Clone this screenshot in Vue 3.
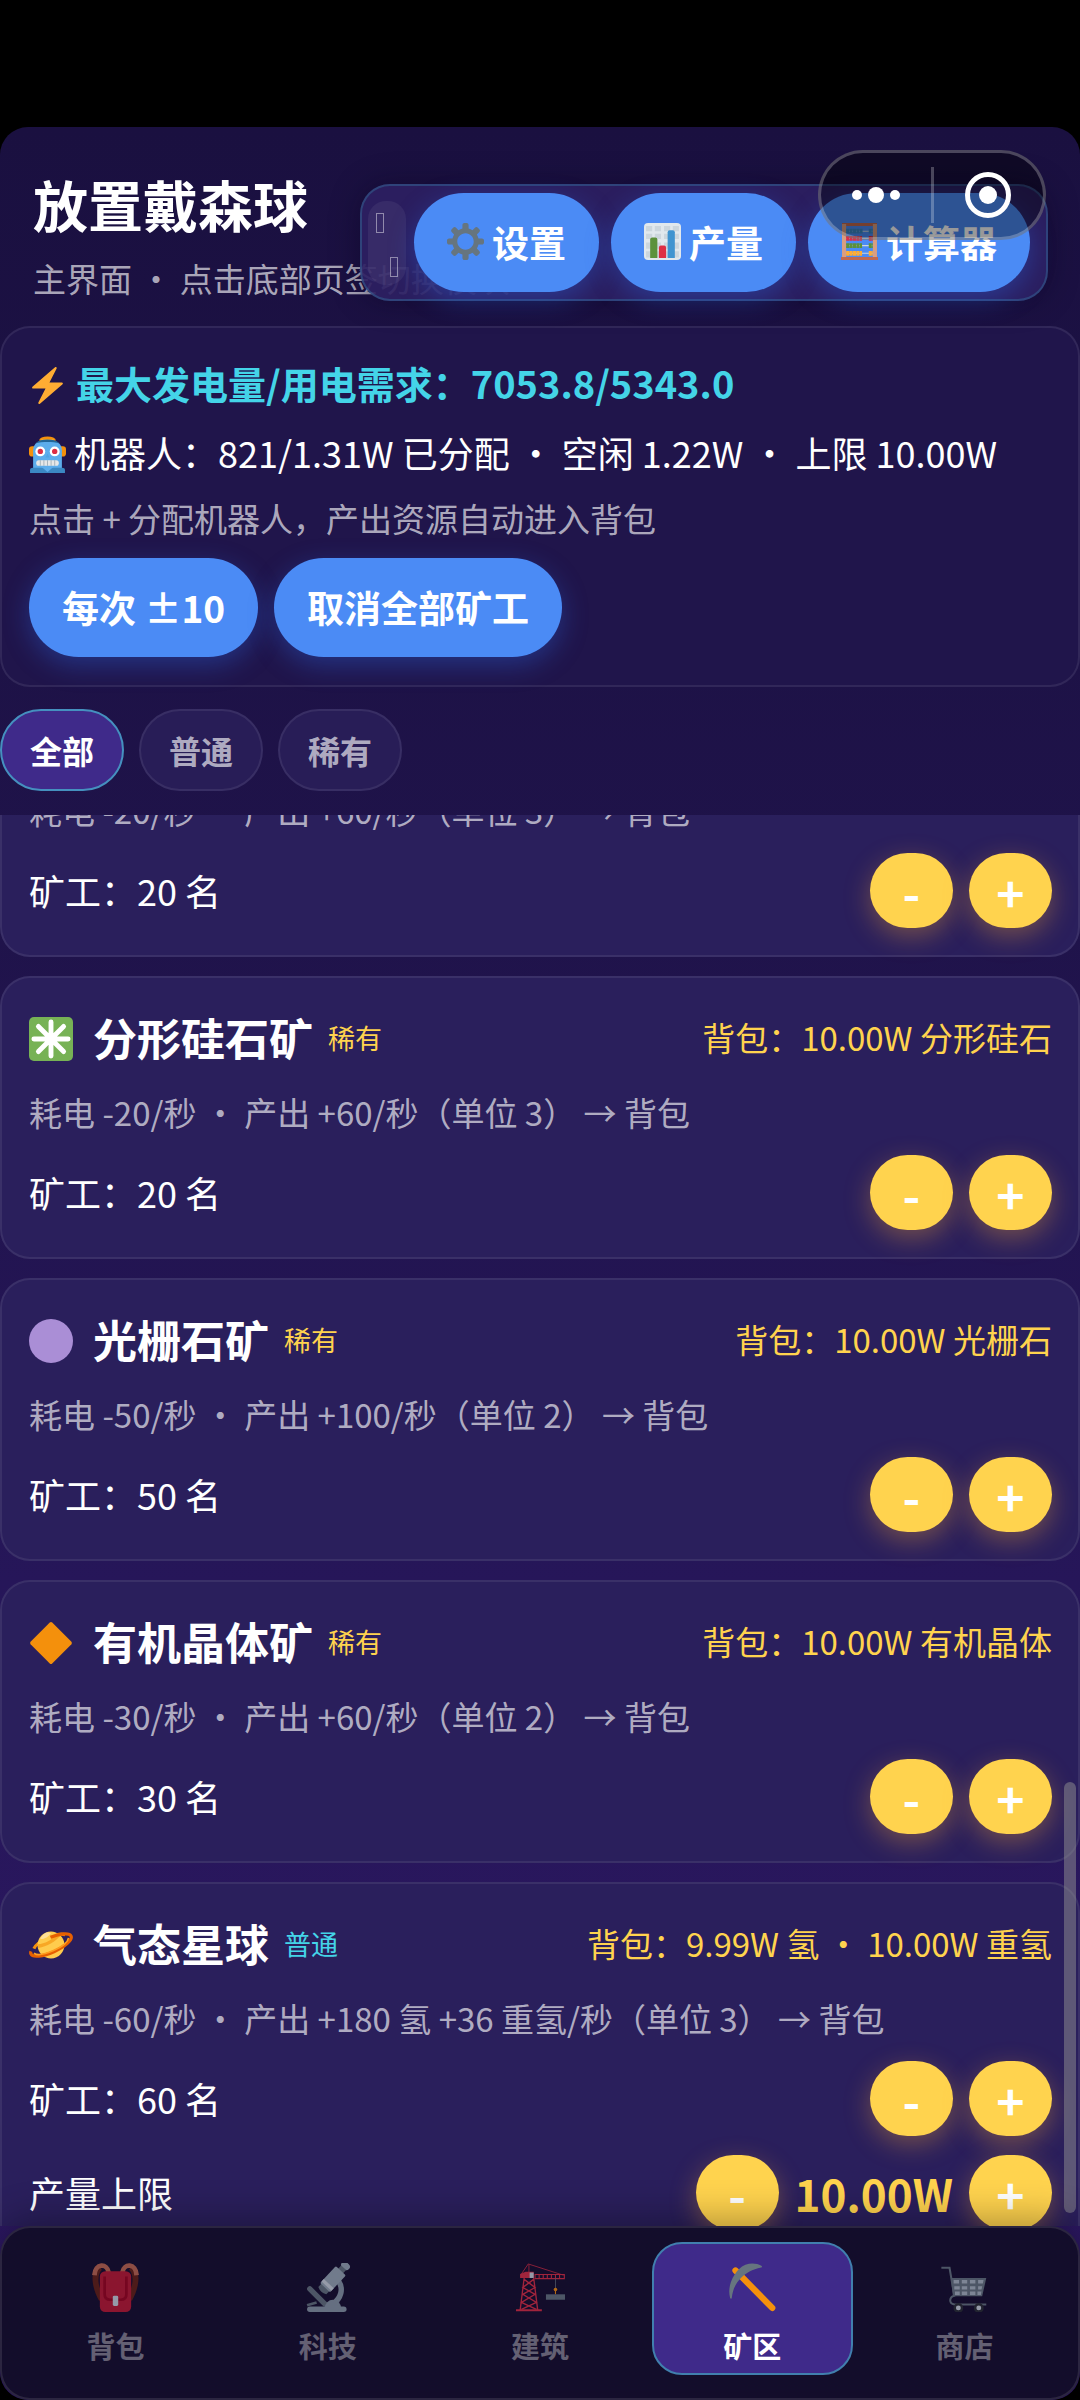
<template>
  <div class="screen">
    <!-- Sprite de iconos -->
    <svg class="sprite" aria-hidden="true">
      <symbol id="i-gear" viewBox="0 0 36 36">
        <path fill="#66757F" d="M34 15h-3.362c-.324-1.369-.864-2.651-1.582-3.814l2.379-2.379c.781-.781.781-2.048 0-2.829l-1.414-1.414c-.781-.781-2.047-.781-2.828 0l-2.379 2.379C23.65 6.225 22.369 5.686 21 5.362V2c0-1.104-.896-2-2-2h-2c-1.104 0-2 .896-2 2v3.362c-1.369.324-2.651.864-3.814 1.582L8.808 4.565c-.781-.781-2.048-.781-2.828 0L4.565 5.979c-.781.781-.781 2.048-.001 2.829l2.379 2.379C6.225 12.35 5.686 13.632 5.362 15H2c-1.104 0-2 .896-2 2v2c0 1.105.896 2 2 2h3.362c.324 1.368.864 2.65 1.582 3.813l-2.379 2.379c-.78.78-.78 2.048.001 2.829l1.414 1.414c.78.78 2.047.78 2.828 0l2.379-2.379c1.163.719 2.445 1.258 3.814 1.582V34c0 1.104.896 2 2 2h2c1.104 0 2-.896 2-2v-3.362c1.368-.324 2.65-.864 3.813-1.582l2.379 2.379c.781.781 2.047.781 2.828 0l1.414-1.414c.781-.781.781-2.048 0-2.829l-2.379-2.379c.719-1.163 1.258-2.444 1.582-3.813H34c1.104 0 2-.895 2-2v-2C36 15.896 35.104 15 34 15zM18 26c-4.418 0-8-3.582-8-8s3.582-8 8-8 8 3.582 8 8-3.582 8-8 8z" />
      </symbol>
      <symbol id="i-chart" viewBox="0 0 36 36">
        <rect width="36" height="36" rx="4" fill="#E1E8ED" />
        <path fill="#CCD6DD" d="M2 3h6v5H2zM10.500 3h6v5h-6zM19.500 3h6v5h-6zM28 3h6v5h-6zM2 10.500h6v5H2zM10.500 10.500h6v5h-6zM19.500 10.500h6v5h-6zM28 10.500h6v5h-6zM2 19h6v6H2zM10.500 19h6v6h-6zM19.500 19h6v6h-6zM28 19h6v6h-6zM2 27.500h6v6H2zM10.500 27.500h6v6h-6zM19.500 27.500h6v6h-6zM28 27.500h6v6h-6z" />
        <path fill="#5C913B" d="M13 34H6V16a2 2 0 0 1 2-2h3a2 2 0 0 1 2 2z" />
        <path fill="#DD2E44" d="M21.500 34h-7V24a2 2 0 0 1 2-2h3a2 2 0 0 1 2 2z" />
        <path fill="#4094D0" d="M30 34h-7V9a2 2 0 0 1 2-2h3a2 2 0 0 1 2 2z" />
      </symbol>
      <symbol id="i-abacus" viewBox="0 0 36 36">
        <path fill="#C1694F" d="M1 0h34v3H1z" />
        <path fill="#D99E82" d="M1 1h4v32H1zM31 1h4v32h-4z" />
        <path stroke="#CCD6DD" stroke-width="1" d="M5 8h26M5 15h26M5 22h26M5 29.500h26" />
        <g stroke-width="4.600" stroke-dasharray="3 .3">
          <path stroke="#3B88C3" d="M5 8h16M27 8h4" />
          <path stroke="#DD2E44" d="M5 15h15.500M27 15h4" />
          <path stroke="#5C913B" d="M5 22h15.500M27 22h4" />
          <path stroke="#FFAC33" d="M5 29.500h15.500M27 29.500h4" />
        </g>
        <path fill="#C1694F" d="M0 33h36v3H0z" />
      </symbol>
      <symbol id="i-bolt" viewBox="0 0 36 36">
        <path fill="#FFAC33" d="M32.938 15.651C32.792 15.260 32.418 15 32 15H19.925L26.890 1.458c.219-.426.106-.947-.271-1.243C26.437.071 26.218 0 26 0c-.233 0-.466.082-.653.243L18 6.588 3.347 19.243c-.316.273-.43.714-.284 1.105S3.582 21 4 21h12.075L9.110 34.542c-.219.426-.106.947.271 1.243.182.144.401.215.619.215.233 0 .466-.082.653-.243L18 29.412l14.653-12.655c.317-.273.430-.714.285-1.106z" />
      </symbol>
      <symbol id="i-robot" viewBox="0 0 36 36">
        <ellipse cx="18" cy="4" rx="8" ry="3.500" fill="#F4900C" />
        <path fill="#FFCC4D" d="M12 3.500h12v1.500H12z" />
        <rect y="10" width="8" height="10" rx="3" fill="#F4900C" />
        <rect x="28" y="10" width="8" height="10" rx="3" fill="#F4900C" />
        <path fill="#5DADEC" d="M4 14c0-7 6-10 14-10s14 3 14 10v18H4z" />
        <path fill="#226699" d="M6.500 7C9 4.500 13 3.500 18 3.500S27 4.500 29.500 7c-6-1.500-17-1.500-23 0z" />
        <circle cx="11" cy="15" r="4.800" fill="#fff" />
        <circle cx="25" cy="15" r="4.800" fill="#fff" />
        <circle cx="11" cy="15" r="2.600" fill="#DD2E44" />
        <circle cx="25" cy="15" r="2.600" fill="#DD2E44" />
        <path fill="#50A5E6" d="M18 17l2 4h-4z" />
        <path fill="#3B88C3" d="M1 33q0-2 3-2h28q3 0 3 2v3H1z" />
        <path fill="#5DADEC" d="M12 30h12l-6 5z" />
        <rect x="7" y="23.500" width="22" height="5.500" rx="2.500" fill="#E6E7E8" />
        <path stroke="#99AAB5" stroke-width=".8" d="M11 23.500V29M14.500 23.500V29M18 23.500V29M21.500 23.500V29M25 23.500V29" />
      </symbol>
      <symbol id="i-asterisk" viewBox="0 0 36 36">
        <rect width="36" height="36" rx="4" fill="#77B255" />
        <path stroke="#fff" stroke-width="4" stroke-linecap="round" d="M18 4v28M4 18h28M7.700 7.700l20.600 20.600M28.300 7.700L7.700 28.300" />
      </symbol>
      <symbol id="i-circle" viewBox="0 0 36 36">
        <circle cx="18" cy="18" r="18" fill="#AA8ED6" />
      </symbol>
      <symbol id="i-diamond" viewBox="0 0 36 36">
        <path fill="#F4900C" d="M17 1.200q1-.9 2 0L34.700 17q.9 1 0 2L19 34.800q-1 .9-2 0L1.300 19q-.9-1 0-2z" />
      </symbol>
      <symbol id="i-planet" viewBox="0 0 36 36">
        <g transform="rotate(-24 18 18)">
          <path fill="none" stroke="#F4900C" stroke-width="2.600" d="M4 15C9 10.500 27 10.500 32 15" />
          <circle cx="18" cy="18" r="11" fill="#FFCC4D" />
          <path fill="#F4900C" d="M8.500 13c5 2 12 2 18-2l2 3c-6 3-14 4-21 2z" opacity=".6" />
          <path fill="#FFE8B6" d="M12 10c3 1.500 7 1 10-1l-3-2q-4 0-7 3z" opacity=".7" />
          <ellipse cx="18" cy="18" rx="18" ry="6" fill="none" stroke="#E65F00" stroke-width="2.600" stroke-dasharray="44 20" stroke-dashoffset="2" />
          <path fill="none" stroke="#FF9D1E" stroke-width="1.400" d="M2.500 18.500C6 24.500 30 24.500 33.500 18.500" />
        </g>
      </symbol>
      <symbol id="i-backpack" viewBox="0 0 36 36">
        <path fill="#662113" d="M6 2C-1 5 0 17 6 28l3-4C4 15 5 8 8 5zM30 2c7 3 6 15 0 26l-3-4c5-9 4-16 1-19z" />
        <path fill="none" stroke="#C1694F" stroke-width="3.500" d="M2.500 9C3 0 12 0 13 7M33.500 9C33 0 24 0 23 7" />
        <rect x="6.500" y="6" width="23" height="30" rx="4" fill="#BE1931" />
        <path fill="none" stroke="#A0041E" stroke-width="2" d="M10 10v13q0 4 4 4h8q4 0 4-4V10" />
        <rect x="16" y="24" width="4" height="7.500" rx="1" fill="#CCD6DD" />
      </symbol>
      <symbol id="i-microscope" viewBox="0 0 36 36">
        <path fill="none" stroke="#8899A6" stroke-width="4" d="M26 13c4 6 2 13-4 17" />
        <path stroke="#66757F" stroke-width="4" stroke-linecap="round" d="M5 19l11 11" />
        <path fill="#8899A6" d="M16 33a6 6 0 0 1 12 0z" />
        <rect x="3" y="32" width="29" height="4" rx="2" fill="#8899A6" />
        <path stroke="#66757F" stroke-width="2" d="M3 31l7-2" />
        <g transform="rotate(43 21 13)">
          <rect x="17.500" y="-4.500" width="7" height="5" rx="2.500" fill="#99AAB5" />
          <path fill="#66757F" d="M18.500 0h5v4h-5zM17 19h8v4q-4 2-8 0z" />
          <rect x="16" y="3" width="10" height="17" rx="1" fill="#99AAB5" />
          <path fill="#CCD6DD" d="M16 16h10v2.500H16z" />
        </g>
      </symbol>
      <symbol id="i-crane" viewBox="0 0 36 36">
        <g fill="none" stroke="#DD2E44" stroke-width="1">
          <path d="M4 8L9 .700 35 9M9.500 1v6" stroke-width=".6" />
          <path d="M6 11L3 35M13 11l3 24M6 12l8 6-9 5 10 6-11 5M13 12l-8 6 9 5-10 6 11 5" />
          <path d="M14 8.500h21.500v3H14zM17 8.500v3M20 8.500v3M23 8.500v3M26 8.500v3M29 8.500v3M32 8.500v3" stroke-width=".8" />
        </g>
        <path fill="#DD2E44" d="M3 8l4-1.500h6V11H3zM0 34h19v1.500H0z" />
        <path fill="#CCD6DD" d="M10 7h3v4h-3z" />
        <path stroke="#66757F" stroke-width=".6" d="M29 11v8" />
        <circle cx="29" cy="19.500" r="1.300" fill="#F4900C" />
        <path stroke="#F4900C" stroke-width=".8" d="M29 20v3" />
        <path fill="#66757F" d="M22 23h14v4H22z" />
      </symbol>
      <symbol id="i-pick" viewBox="0 0 36 36">
        <path stroke="#F4900C" stroke-width="4.600" stroke-linecap="round" d="M5.500 5.500L32.500 33" />
        <path fill="#66757F" d="M24.500 2C20-.500 13-.500 8 4.500S-.500 18 1.500 25.500c.3 1 1.200 1 1.300 0C3.500 19 6 14.500 9.500 11S18 4.500 24.300 3.300c1-.2.900-.9.200-1.300z" />
      </symbol>
      <symbol id="i-cart" viewBox="0 0 36 36">
        <path fill="#66757F" d="M8 11h26l-3 13.500H9.500z" />
        <path fill="none" stroke="#66757F" stroke-width="1.500" d="M1 3.500h6L10.500 24c-4 1-4 6 0 6.500H34" />
        <path fill="#AAB8C2" d="M10 12.500h4v2.500h-4zM16 12.500h4v2.500h-4zM22 12.500h4v2.500h-4zM28 12.500h4l-.5 2.500H28zM10.500 17h4v2.500h-4zM16 17h4v2.500h-4zM22 17h4v2.500h-4zM28 17h3l-.5 2.500H28zM11 21h3.500v2.500H11zM16 21h4v2.500h-4zM22 21h4v2.500h-4zM27.500 21h3l-.5 2.500h-2.500z" />
        <circle cx="13.500" cy="33" r="2.700" fill="#CCD6DD" stroke="#292F33" stroke-width="1.800" />
        <circle cx="28.500" cy="33" r="2.700" fill="#CCD6DD" stroke="#292F33" stroke-width="1.800" />
      </symbol>
    </svg>

    <div class="app">
      <header class="header">
        <h1 class="header__title">放置戴森球</h1>
        <p class="header__sub">主界面 • 点击底部页签切换模块</p>
      </header>

      <div class="toolbar">
        <div class="toolbar__handle">
          <span class="toolbar__grip"></span>
          <span class="toolbar__grip toolbar__grip--end"></span>
        </div>
        <div class="toolbar__actions">
          <button v-for="t in tools" :key="t.label" class="btn" type="button">
            <svg class="btn__icon"><use :href="'#i-' + t.icon" /></svg>
            {{ t.label }}
          </button>
        </div>
      </div>

      <div class="capsule">
        <button class="capsule__btn" type="button" aria-label="更多">
          <svg class="capsule__more" viewBox="0 0 50 20">
            <circle cx="6" cy="10" r="5" /><circle cx="25" cy="10" r="8" /><circle cx="44" cy="10" r="5" />
          </svg>
        </button>
        <span class="capsule__line"></span>
        <button class="capsule__btn" type="button" aria-label="关闭">
          <svg class="capsule__close" viewBox="0 0 46 46">
            <circle cx="23" cy="23" r="20.500" class="capsule__ring" /><circle cx="23" cy="23" r="9" />
          </svg>
        </button>
      </div>

      <section class="panel summary">
        <p class="summary__line summary__line--power">
          <svg class="summary__icon"><use href="#i-bolt" /></svg>
          <span>最大发电量/用电需求：7053.8/5343.0</span>
        </p>
        <p class="summary__line">
          <svg class="summary__icon"><use href="#i-robot" /></svg>
          <span>机器人：821/1.31W 已分配 • 空闲 1.22W • 上限 10.00W</span>
        </p>
        <p class="muted">点击 + 分配机器人，产出资源自动进入背包</p>
        <div class="summary__actions">
          <button class="btn" type="button">每次 ±10</button>
          <button class="btn" type="button">取消全部矿工</button>
        </div>
      </section>

      <div class="tabs">
        <button
          v-for="f in filters"
          :key="f"
          class="tab"
          :class="{ 'tab--active': f === filter }"
          type="button"
          @click="filter = f"
        >{{ f }}</button>
      </div>

      <main class="mines">
        <div ref="list" class="mines__scroll">
          <article v-for="(m, i) in mines" :key="i" class="panel mine">
            <div v-if="m.name" class="mine__head">
              <svg class="mine__icon"><use :href="'#i-' + m.icon" /></svg>
              <h2 class="mine__name">{{ m.name }}</h2>
              <span class="mine__tag" :class="{ 'mine__tag--common': m.tag === '普通' }">{{ m.tag }}</span>
              <span class="mine__stock">背包：{{ m.stock }}</span>
            </div>
            <p class="muted">{{ m.desc }}</p>
            <div class="mine__row">
              <span class="mine__label">矿工：{{ m.workers }} 名</span>
              <div class="stepper">
                <button class="step" type="button" @click="m.workers -= 10">-</button>
                <button class="step" type="button" @click="m.workers += 10">+</button>
              </div>
            </div>
            <div v-if="m.cap" class="mine__row">
              <span class="mine__label">产量上限</span>
              <div class="stepper">
                <button class="step" type="button">-</button>
                <strong class="stepper__value">{{ m.cap }}</strong>
                <button class="step" type="button">+</button>
              </div>
            </div>
          </article>
        </div>
        <span class="mines__thumb"></span>
      </main>

      <nav class="nav">
        <button
          v-for="n in pages"
          :key="n.label"
          class="nav__item"
          :class="{ 'nav__item--active': n.label === page }"
          type="button"
          @click="page = n.label"
        >
          <svg class="nav__icon"><use :href="'#i-' + n.icon" /></svg>
          {{ n.label }}
        </button>
      </nav>
    </div>
  </div>
</template>

<script setup>
import { onMounted, reactive, ref } from 'vue'

const tools = [
  { icon: 'gear', label: '设置' },
  { icon: 'chart', label: '产量' },
  { icon: 'abacus', label: '计算器' }
]

const filters = ['全部', '普通', '稀有']
const filter = ref('全部')

const mines = reactive([
  { desc: '耗电 -20/秒 • 产出 +60/秒（单位 3） → 背包', workers: 20 },
  { icon: 'asterisk', name: '分形硅石矿', tag: '稀有', stock: '10.00W 分形硅石', desc: '耗电 -20/秒 • 产出 +60/秒（单位 3） → 背包', workers: 20 },
  { icon: 'circle', name: '光栅石矿', tag: '稀有', stock: '10.00W 光栅石', desc: '耗电 -50/秒 • 产出 +100/秒（单位 2） → 背包', workers: 50 },
  { icon: 'diamond', name: '有机晶体矿', tag: '稀有', stock: '10.00W 有机晶体', desc: '耗电 -30/秒 • 产出 +60/秒（单位 2） → 背包', workers: 30 },
  { icon: 'planet', name: '气态星球', tag: '普通', stock: '9.99W 氢 • 10.00W 重氢', desc: '耗电 -60/秒 • 产出 +180 氢 +36 重氢/秒（单位 3） → 背包', workers: 60, cap: '10.00W' }
])

const pages = [
  { icon: 'backpack', label: '背包' },
  { icon: 'microscope', label: '科技' },
  { icon: 'crane', label: '建筑' },
  { icon: 'pick', label: '矿区' },
  { icon: 'cart', label: '商店' }
]
const page = ref('矿区')

const list = ref(null)

onMounted(() => {
  list.value.scrollTop = 57
})
</script>

<style>
body {
  margin: 0;
  background: #000;
}
</style>

<style scoped>
.screen {
  box-sizing: border-box;
  height: 100vh;
  padding-top: 127px;
  background: #000;
  color: #fff;
  font-family: 'Noto Sans CJK SC', 'Noto Sans', sans-serif;
}

.screen *,
.screen *::before {
  box-sizing: border-box;
}

.sprite {
  display: none;
}

h1,
h2,
p {
  margin: 0;
}

button {
  margin: 0;
  border: none;
  font-family: inherit;
  cursor: pointer;
}

.app {
  position: relative;
  display: flex;
  flex-direction: column;
  height: 100%;
  overflow: hidden;
  border-radius: 28px;
  background: linear-gradient(180deg, #1a1040 0%, #1f134a 34%, #261659 64%, #2d1863 100%);
}

/* ── Header ── */
.header {
  display: flex;
  flex-direction: column;
  gap: 11px;
  padding: 36px 33px 24px;
}

.header__title {
  font-size: 55px;
  line-height: 80px;
  font-weight: 700;
}

.header__sub {
  font-size: 33px;
  line-height: 48px;
  color: rgba(255, 255, 255, 0.65);
}

/* ── Toolbar ── */
.toolbar {
  position: absolute;
  top: 57px;
  right: 32px;
  display: flex;
  align-items: center;
  gap: 8px;
  padding: 7px 16px 7px 6px;
  border: 2px solid rgba(68, 214, 232, 0.2);
  border-radius: 30px;
  background: rgba(45, 32, 98, 0.92);
  box-shadow: 0 0 30px rgba(10, 6, 30, 0.4);
}

.toolbar__handle {
  display: flex;
  flex-direction: column;
  justify-content: space-between;
  width: 38px;
  height: 84px;
  padding: 12px 8px 8px;
  border-radius: 18px;
  background: rgba(255, 255, 255, 0.06);
}

.toolbar__grip {
  width: 8px;
  height: 20px;
  border: 1px solid rgba(255, 255, 255, 0.45);
}

.toolbar__grip--end {
  align-self: flex-end;
}

.toolbar__actions {
  display: flex;
  gap: 12px;
}

.btn {
  display: flex;
  align-items: center;
  gap: 8px;
  height: 99px;
  padding: 0 33px 2px;
  border-radius: 50px;
  background: #4b8bf5;
  box-shadow: 0 8px 26px rgba(43, 108, 238, 0.35);
  color: #fff;
  font-size: 37px;
  line-height: 54px;
  font-weight: 700;
  white-space: nowrap;
}

.btn__icon {
  width: 37px;
  height: 37px;
}

/* ── Capsule ── */
.capsule {
  position: absolute;
  top: 23px;
  right: 34px;
  display: flex;
  align-items: center;
  width: 228px;
  height: 90px;
  border: 3px solid rgba(255, 255, 255, 0.25);
  border-radius: 45px;
  background: rgba(0, 0, 0, 0.4);
}

.capsule__btn {
  display: flex;
  flex: 1;
  align-items: center;
  justify-content: center;
  padding: 0;
  background: none;
}

.capsule__more {
  width: 50px;
  height: 20px;
  fill: #fff;
}

.capsule__close {
  width: 46px;
  height: 46px;
  fill: #fff;
}

.capsule__ring {
  fill: none;
  stroke: #fff;
  stroke-width: 5;
}

.capsule__line {
  width: 3px;
  height: 56px;
  background: rgba(255, 255, 255, 0.25);
}

/* ── Panels ── */
.panel {
  border: 2px solid rgba(255, 255, 255, 0.08);
  border-radius: 30px;
  background: #2a1f5c;
}

.muted {
  padding-bottom: 4px;
  font-size: 33px;
  line-height: 46px;
  color: rgba(255, 255, 255, 0.65);
  white-space: nowrap;
}

.summary {
  display: flex;
  flex-direction: column;
  gap: 13px;
  padding: 29px 27px 28px;
  background: #20154b;
}

.summary__line {
  display: flex;
  align-items: center;
  gap: 8px;
  height: 56px;
  font-size: 36px;
  line-height: 52px;
  white-space: nowrap;
}

.summary__line span {
  padding-bottom: 4px;
}

.summary__line--power {
  gap: 10px;
  color: #44d4e8;
  font-size: 38px;
  font-weight: 700;
}

.summary__icon {
  width: 37px;
  height: 37px;
}

.summary__actions {
  display: flex;
  gap: 16px;
}

/* ── Tabs ── */
.tabs {
  display: flex;
  gap: 15px;
  padding: 22px 0 24px;
}

.tab {
  height: 82px;
  padding: 0 28px;
  border: 2px solid rgba(255, 255, 255, 0.08);
  border-radius: 41px;
  background: #281d57;
  color: rgba(255, 255, 255, 0.65);
  font-size: 32px;
  line-height: 48px;
  font-weight: 700;
}

.tab--active {
  border-color: #4590bf;
  background: #3f2a8a;
  color: #fff;
}

/* ── Mines ── */
.mines {
  position: relative;
  flex: 1;
  min-height: 0;
}

.mines__scroll {
  display: flex;
  flex-direction: column;
  gap: 19px;
  height: 100%;
  overflow-y: auto;
  scrollbar-width: none;
}

.mines__thumb {
  position: absolute;
  right: 4px;
  bottom: 13px;
  width: 12px;
  height: 431px;
  border-radius: 6px;
  background: rgba(145, 145, 145, 0.5);
}

.mine {
  display: flex;
  flex-direction: column;
  flex-shrink: 0;
  gap: 16px;
  padding: 27px 26px 27px 27px;
}

.mine__head {
  display: flex;
  align-items: center;
  height: 68px;
  white-space: nowrap;
}

.mine__icon {
  width: 44px;
  height: 44px;
  margin-right: 20px;
}

.mine__name,
.mine__tag,
.mine__stock {
  padding-bottom: 4px;
}

.mine__name {
  margin-right: 15px;
  font-size: 44px;
  line-height: 64px;
  font-weight: 700;
}

.mine__tag {
  color: #ffd34e;
  font-size: 27px;
}

.mine__tag--common {
  color: #44d4e8;
}

.mine__stock {
  margin-left: auto;
  color: #ffd34e;
  font-size: 33px;
}

.mine__row {
  display: flex;
  align-items: center;
  justify-content: space-between;
  font-size: 36px;
  line-height: 54px;
}

.mine__row + .mine__row {
  margin-top: 3px;
}

.mine__label {
  padding-bottom: 2px;
}

.stepper {
  display: flex;
  align-items: center;
  gap: 16px;
}

.stepper__value {
  color: #ffd34e;
  font-size: 44px;
}

.step {
  width: 83px;
  height: 75px;
  padding: 0;
  border-radius: 38px;
  background: #ffd34e;
  box-shadow: 0 8px 26px rgba(255, 170, 50, 0.35);
  color: #fff;
  font-size: 48px;
  line-height: 72px;
  font-weight: 700;
}

/* ── Bottom nav ── */
.nav {
  position: relative;
  display: flex;
  gap: 11px;
  padding: 14px 13px 23px;
  border: 2px solid rgba(255, 255, 255, 0.1);
  border-radius: 30px;
  background: #130d2b;
  box-shadow: 0 -8px 36px rgba(0, 0, 0, 0.3);
}

.nav__item {
  display: flex;
  flex: 1;
  flex-direction: column;
  align-items: center;
  gap: 12px;
  height: 133px;
  padding: 19px 0 0;
  border: 2px solid transparent;
  border-radius: 30px;
  background: none;
  color: rgba(255, 255, 255, 0.35);
  font-size: 29px;
  line-height: 42px;
  font-weight: 700;
}

.nav__item--active {
  border-color: #417fae;
  background: #3f2a8a;
  color: #fff;
}

.nav__icon {
  width: 49px;
  height: 49px;
  opacity: 0.7;
}

.nav__item--active .nav__icon {
  opacity: 1;
}
</style>
